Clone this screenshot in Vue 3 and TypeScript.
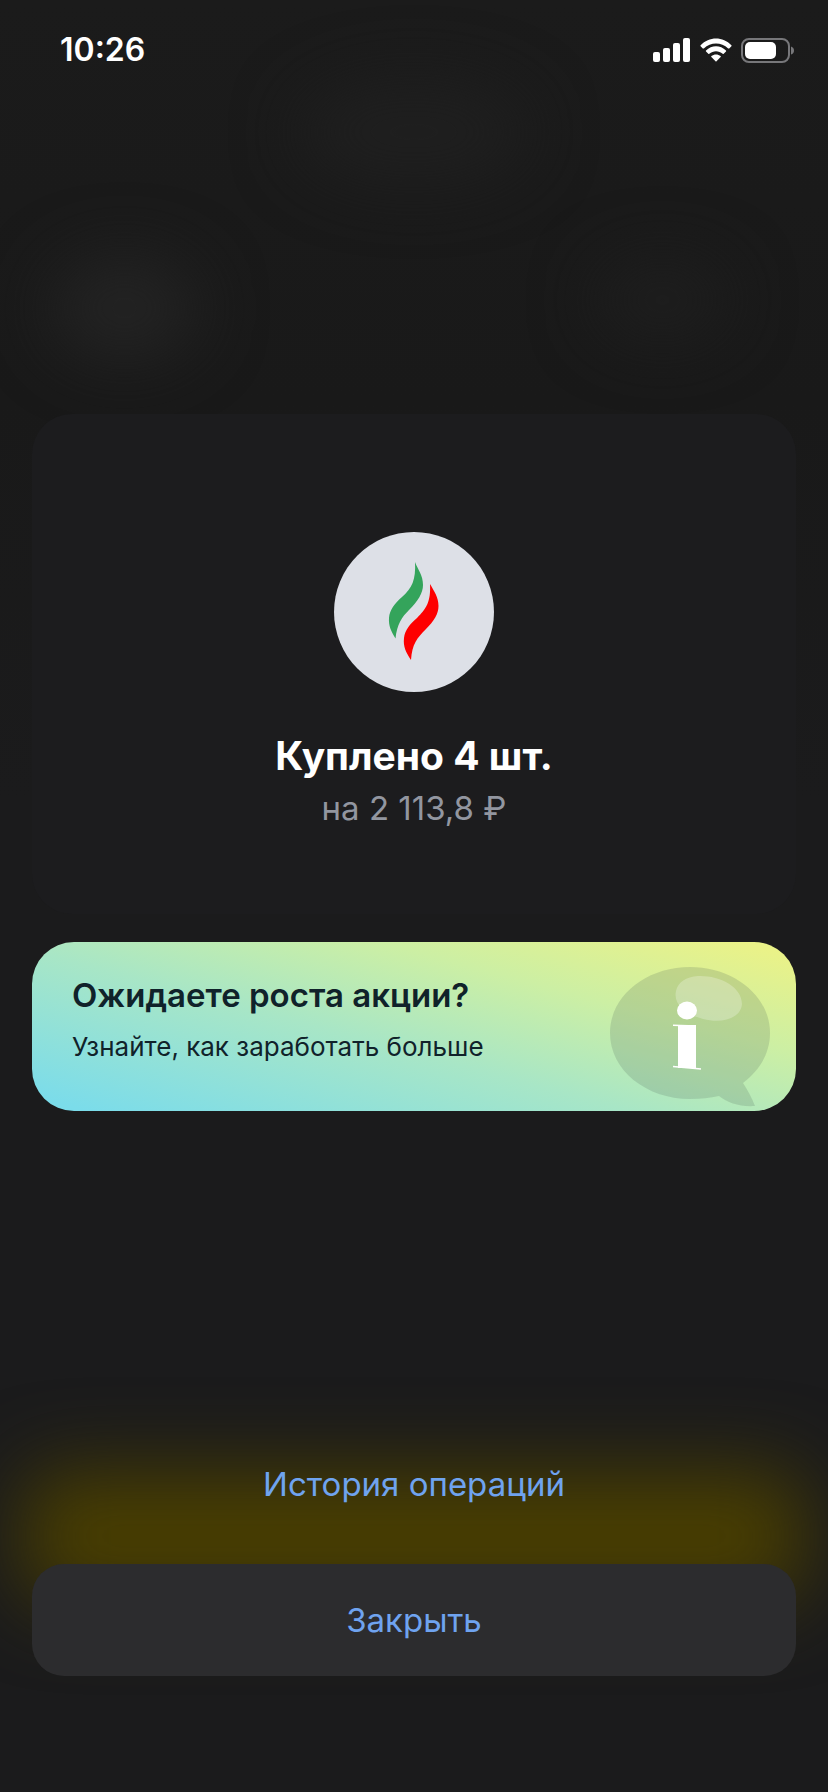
<script setup lang="ts">
interface Purchase {
  title: string
  amount: string
}

const time = '10:26'
const purchase: Purchase = { title: 'Куплено 4 шт.', amount: 'на 2\u00a0113,8 ₽' }
</script>

<template>
  <div class="screen">
    <div class="haze haze-center"></div>
    <div class="haze haze-left"></div>
    <div class="haze haze-right"></div>

    <header class="status">
      <time class="clock">{{ time }}</time>
      <div class="indicators">
        <svg width="38" height="24" viewBox="0 0 38 24" fill="#fff" aria-label="Сигнал">
          <rect x="0" y="14" width="7" height="10" rx="2" />
          <rect x="10" y="10" width="7" height="14" rx="2" />
          <rect x="20" y="5" width="7" height="19" rx="2" />
          <rect x="30" y="0" width="7" height="24" rx="2" />
        </svg>
        <svg width="32" height="24" viewBox="0 0 32 24" fill="#fff" aria-label="Wi-Fi">
          <path d="M0.6 7.2C9 -1.8 23 -1.8 31.4 7.2Q31.8 7.7 31.4 8.2L29.2 10.4Q28.7 10.8 28.2 10.4C21.3 3.9 10.7 3.9 3.8 10.4Q3.3 10.8 2.8 10.4L0.6 8.2Q0.2 7.7 0.6 7.2Z" />
          <path d="M6 12.6C11.6 6.9 20.4 6.9 26 12.6Q26.4 13.1 26 13.6L23.7 15.8Q23.2 16.2 22.7 15.8C18.8 12.4 13.2 12.4 9.3 15.8Q8.8 16.2 8.3 15.8L6 13.6Q5.6 13.1 6 12.6Z" />
          <path d="M11.4 18.1C14 15.9 18 15.9 20.6 18.1Q21.1 18.6 20.6 19.1L16.5 23.2Q16 23.6 15.5 23.2L11.4 19.1Q10.9 18.6 11.4 18.1Z" />
        </svg>
        <svg width="54" height="25" viewBox="0 0 54 25" aria-label="Батарея">
          <rect x="1" y="1" width="47" height="23" rx="7" fill="none" stroke="#77777a" stroke-width="2" />
          <rect x="4" y="4" width="31" height="17" rx="5" fill="#fff" />
          <path d="M50 8.5Q53 9.5 53 12.5Q53 15.5 50 16.5Z" fill="#77777a" />
        </svg>
      </div>
    </header>

    <main class="content">
      <section class="card">
        <svg class="logo" viewBox="0 0 160 160" aria-hidden="true">
          <circle cx="80" cy="80" r="80" fill="#dde0e7" />
          <path fill="#34a45b" d="M81 30C84 38 89 43 89 53C89 61 84 69 75 78C68 85 63 92 61.500 106.500C57 99 54.500 94 55 86C55.500 78 61 71 68 65C78 56 82 48 81 30Z" />
          <path fill="#fe0000" d="M96 52C100 59 104.500 65 104.500 74C104.500 82 100 89 92 97C83 106 78 112 77 128C72 120 69 115 70 106C71 98 76 92 83 86C92 77 97 70 96 52Z" />
        </svg>
        <h1 class="title">{{ purchase.title }}</h1>
        <p class="amount">{{ purchase.amount }}</p>
      </section>

      <a class="banner" href="#">
        <span class="banner-text">
          <strong class="banner-title">Ожидаете роста акции?</strong>
          <span class="banner-note">Узнайте, как заработать больше</span>
        </span>
        <svg class="bubble" width="160" height="140" viewBox="0 0 160 140" aria-hidden="true">
          <path fill="#50645a" fill-opacity=".2" d="M80 0C124 0 160 29 160 66C160 86 150 103 133 116C138 124 142 131 145 139C130 140 118 136 109 129C100 131 91 132 80 132C36 132 0 103 0 66C0 29 36 0 80 0Z" />
          <path fill="#fff" fill-opacity=".25" d="M88 9C108 8 132 19 132 37C131 51 113 57 93 52C75 47 63 37 66 24C68 15 76 10 88 9Z" />
          <ellipse cx="77" cy="43.500" rx="10" ry="9" fill="#fff" />
          <rect x="68" y="58" width="18" height="43" fill="#fff" />
          <path d="M63 58.200L86 59M63 99.500L91 102" stroke="#fff" stroke-width="1.600" />
        </svg>
      </a>
    </main>

    <footer class="actions">
      <div class="glow"></div>
      <button class="history" type="button">История операций</button>
      <button class="close" type="button">Закрыть</button>
    </footer>
  </div>
</template>

<style>
html,
body {
  margin: 0;
  background: #1b1b1c;
}
</style>

<style scoped>
.screen {
  position: relative;
  display: flex;
  flex-direction: column;
  box-sizing: border-box;
  min-height: 100vh;
  padding: 0 32px 116px;
  overflow: hidden;
  background: linear-gradient(#1b1b1b 0, #191919 400px, #1b1b1c 800px);
  color: #fff;
  font-family: Inter, "Liberation Sans", sans-serif;
}

.haze {
  position: absolute;
  border-radius: 50%;
  filter: blur(32px);
}

.haze-center {
  top: 80px;
  left: 36%;
  width: 28%;
  height: 104px;
  background: #1f1f1f;
}

.haze-left {
  top: 256px;
  left: 6%;
  width: 18%;
  height: 104px;
  background: #232323;
}

.haze-right {
  top: 260px;
  right: 12%;
  width: 16%;
  height: 80px;
  background: #1e1e1e;
}

.status {
  position: relative;
  display: flex;
  align-items: center;
  justify-content: space-between;
  height: 100px;
  padding: 0 1px 0 28px;
}

.clock {
  font-size: 32px;
  font-weight: 600;
  line-height: 40px;
}

.indicators {
  display: flex;
  align-items: center;
  gap: 9px;
}

.content {
  position: relative;
  display: flex;
  flex-direction: column;
  gap: 28px;
  padding-top: 314px;
}

.card {
  display: flex;
  flex-direction: column;
  align-items: center;
  padding: 118px 32px 86px;
  border-radius: 40px;
  background: #1c1c1e;
}

.logo {
  width: 160px;
  height: 160px;
}

.title {
  margin: 40px 0 0;
  font-size: 39px;
  font-weight: 700;
  line-height: 48px;
}

.amount {
  margin: 8px 0 0;
  color: #9296a0;
  font-size: 33px;
  line-height: 40px;
}

.banner {
  display: flex;
  justify-content: space-between;
  box-sizing: border-box;
  padding: 25px 26px 4px 40px;
  border-radius: 42px;
  background: linear-gradient(15deg, #7bdcea 4%, #a8e6c6 43%, #ccefa4 70%, #eaf288 96%);
  color: #10222a;
  text-decoration: none;
}

.banner-text {
  display: flex;
  flex-direction: column;
  gap: 12px;
  padding-top: 8px;
}

.banner-title {
  font-size: 33px;
  font-weight: 600;
  line-height: 40px;
}

.banner-note {
  font-size: 26px;
  line-height: 40px;
}

.bubble {
  flex: none;
}

.actions {
  position: relative;
  display: flex;
  flex-direction: column;
  gap: 24px;
  margin-top: auto;
}

.glow {
  position: absolute;
  top: 44px;
  left: -8px;
  right: -8px;
  height: 128px;
  border-radius: 32px;
  background: #4a3f00;
  filter: blur(40px);
}

.history,
.close {
  position: relative;
  height: 112px;
  padding: 0;
  border: 0;
  border-radius: 32px;
  background: none;
  color: #6fa3ef;
  font: 400 33px/40px Inter, "Liberation Sans", sans-serif;
  cursor: pointer;
}

.close {
  background: #2c2c2e;
}
</style>
